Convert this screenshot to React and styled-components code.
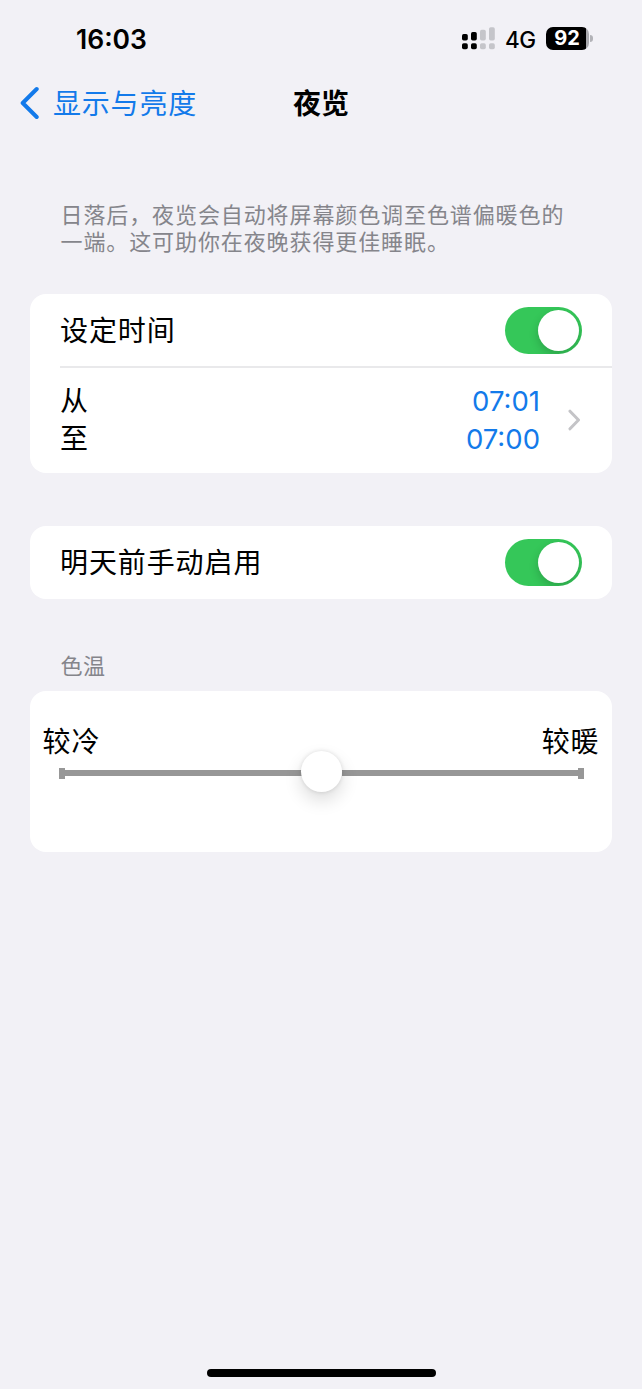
import React from "react";
import styled, { createGlobalStyle } from "styled-components";

const Global = createGlobalStyle`
  * { box-sizing: border-box; }
  body {
    margin: 0;
    background: #f2f1f6;
    color: #000;
    font-family: Inter, "Noto Sans CJK SC", sans-serif;
  }
`;

const Screen = styled.div`
  display: flex;
  flex-direction: column;
  height: 1389px;
  width: 642px;
  overflow: hidden;
`;

const StatusBar = styled.header`
  display: flex;
  justify-content: space-between;
  align-items: center;
  height: 76px;
  padding: 0 49px 0 76px;
`;

const Clock = styled.span`
  font-size: 26.5px;
  font-weight: 600;
  line-height: 32px;
  letter-spacing: 0;
  padding-top: 2px;
`;

const StatusIcons = styled.div`
  display: flex;
  align-items: center;
`;

const Network = styled.span`
  margin: 3px 0 0 10px;
  width: 41px;
  font-size: 22.5px;
  font-weight: 450;
  line-height: 28px;
  letter-spacing: -0.6px;
`;

const Battery = styled.div`
  display: flex;
  align-items: center;
  justify-content: center;
  width: 43px;
  height: 23px;
  padding-right: 1px;
  border-radius: 7px;
  background: linear-gradient(to right, #000 39.5px, #a9a9ae 39.5px);
  color: #fff;
  font-size: 20px;
  font-weight: 700;
  line-height: 23px;
`;

const BatteryCap = styled.div`
  width: 3px;
  height: 7px;
  margin-left: 1px;
  border-radius: 0 3px 3px 0;
  background: #b2b2b7;
`;

const NavBar = styled.nav`
  display: grid;
  grid-template-columns: 1fr auto 1fr;
  align-items: center;
  height: 54px;
  padding: 0 20px;
`;

const BackLink = styled.a`
  display: flex;
  align-items: center;
  gap: 13px;
  color: #137aea;
  font-size: 28px;
  line-height: 40px;
  letter-spacing: 0.8px;
`;

const BackText = styled.span`
  padding-top: 2px;
`;

const Title = styled.h1`
  margin: 0;
  padding-top: 2px;
  font-size: 28px;
  font-weight: 700;
  line-height: 40px;
`;

const Content = styled.main`
  display: flex;
  flex-direction: column;
  flex: 1;
  padding: 72px 30px 0;
`;

const Note = styled.p`
  margin: 0 0 37.5px;
  padding-left: 30.5px;
  color: #85858b;
  font-size: 22px;
  line-height: 27px;
  letter-spacing: 0.9px;
  white-space: nowrap;
`;

const Card = styled.section`
  display: flex;
  flex-direction: column;
  height: ${(p) => p.$height}px;
  margin-bottom: ${(p) => p.$gap || 0}px;
  border-radius: 16px;
  background: #fff;
`;

const Row = styled.div`
  display: flex;
  align-items: center;
  justify-content: space-between;
  height: 73px;
  padding: 0 30px;
`;

const Divider = styled.div`
  height: 2px;
  margin: -1px 0 0 30px;
  background: #e9e9eb;
`;

const Label = styled.span`
  padding-top: ${(p) => p.$drop || 0}px;
  font-size: 28px;
  line-height: 38px;
  letter-spacing: 0.9px;
`;

const ScheduleRow = styled.div`
  display: flex;
  align-items: center;
  flex: 1;
  padding: 0 31px 0 30px;
`;

const Stack = styled.div`
  display: flex;
  flex-direction: column;
  flex: 1;
  align-items: ${(p) => (p.$end ? "flex-end" : "flex-start")};
  margin-right: ${(p) => (p.$end ? 28 : 0)}px;
`;

const Time = styled.span`
  color: #137aea;
  font-size: 27.5px;
  line-height: 38px;
  letter-spacing: 0;
`;

const Switch = styled.div`
  display: flex;
  align-items: center;
  justify-content: flex-end;
  width: 77px;
  height: 47px;
  padding-right: 3px;
  border-radius: 24px;
  background: #35c759;
  overflow: hidden;
`;

const SwitchKnob = styled.div`
  width: 41px;
  height: 41px;
  border-radius: 50%;
  background: #fff;
  box-shadow: 0 4px 10px rgba(0, 0, 0, 0.18);
`;

const SectionTitle = styled.h2`
  margin: 0 0 9px;
  padding-left: 30.5px;
  color: #85858b;
  font-size: 22px;
  font-weight: 400;
  line-height: 32px;
  letter-spacing: 0.5px;
`;

const SliderLabels = styled.div`
  display: flex;
  justify-content: space-between;
  padding: 31px 12.5px 0 12.5px;
`;

const SliderTrack = styled.div`
  display: grid;
  grid-template-columns: 6px 1fr 41px 1fr 6px;
  align-items: center;
  height: 41px;
  margin: -10px 28.5px 0 28.5px;
`;

const Tick = styled.div`
  height: 11px;
  margin-top: 4px;
  background: #979797;
`;

const Rail = styled.div`
  height: 6px;
  margin: 4px -3px 0 0;
  background: #979797;
`;

const SliderKnob = styled.div`
  z-index: 1;
  height: 41px;
  border-radius: 50%;
  background: #fff;
  box-shadow: 0 8px 18px rgba(0, 0, 0, 0.14), 0 0 4px rgba(0, 0, 0, 0.12);
`;

const HomeIndicator = styled.div`
  align-self: center;
  width: 229px;
  height: 8px;
  margin-bottom: 12px;
  border-radius: 4px;
  background: #000;
`;

function Signal() {
  return (
    <svg width="34" height="23" viewBox="0 0 34 23">
      <g fill="#000">
        <rect x="1" y="7" width="5.8" height="6.5" rx="1.7" />
        <rect x="10" y="5" width="5.8" height="8.5" rx="1.7" />
        <rect x="1" y="16.2" width="5.8" height="6" rx="1.7" />
        <rect x="10" y="16.2" width="5.8" height="6" rx="1.7" />
      </g>
      <g fill="#c5c5ca">
        <rect x="19" y="2.7" width="5.8" height="10.8" rx="1.7" />
        <rect x="28" y="0.2" width="5.8" height="13.3" rx="1.7" />
        <rect x="19" y="16.2" width="5.8" height="6" rx="1.7" />
        <rect x="28" y="16.2" width="5.8" height="6" rx="1.7" />
      </g>
    </svg>
  );
}

function BackIcon() {
  return (
    <svg width="20" height="34" viewBox="0 0 20 34" fill="none">
      <path d="M16.7 3L2.7 17L16.7 31" stroke="#137aea" strokeWidth="4" strokeLinecap="round" strokeLinejoin="round" />
    </svg>
  );
}

function ChevronIcon() {
  return (
    <svg width="13" height="22" viewBox="0 0 13 22" fill="none">
      <path d="M2 2.2L10.5 11L2 19.8" stroke="#c4c4c7" strokeWidth="3" strokeLinecap="round" strokeLinejoin="round" />
    </svg>
  );
}

function Toggle() {
  return (
    <Switch role="switch" aria-checked="true">
      <SwitchKnob />
    </Switch>
  );
}

export default function App() {
  return (
    <Screen>
      <Global />
      <StatusBar>
        <Clock>16:03</Clock>
        <StatusIcons>
          <Signal />
          <Network>4G</Network>
          <Battery>92</Battery>
          <BatteryCap />
        </StatusIcons>
      </StatusBar>
      <NavBar>
        <BackLink>
          <BackIcon />
          <BackText>显示与亮度</BackText>
        </BackLink>
        <Title>夜览</Title>
      </NavBar>
      <Content>
        <Note>
          日落后，夜览会自动将屏幕颜色调至色谱偏暖色的
          <br />
          一端。这可助你在夜晚获得更佳睡眠。
        </Note>
        <Card $height={179} $gap={53}>
          <Row>
            <Label $drop={2}>设定时间</Label>
            <Toggle />
          </Row>
          <Divider />
          <ScheduleRow>
            <Stack>
              <Label>从</Label>
              <Label>至</Label>
            </Stack>
            <Stack $end>
              <Time>07:01</Time>
              <Time>07:00</Time>
            </Stack>
            <ChevronIcon />
          </ScheduleRow>
        </Card>
        <Card $height={73} $gap={51}>
          <Row>
            <Label $drop={2}>明天前手动启用</Label>
            <Toggle />
          </Row>
        </Card>
        <SectionTitle>色温</SectionTitle>
        <Card $height={161.5}>
          <SliderLabels>
            <Label $drop={1}>较冷</Label>
            <Label $drop={1}>较暖</Label>
          </SliderLabels>
          <SliderTrack>
            <Tick />
            <Rail />
            <SliderKnob />
            <Rail />
            <Tick />
          </SliderTrack>
        </Card>
      </Content>
      <HomeIndicator />
    </Screen>
  );
}
